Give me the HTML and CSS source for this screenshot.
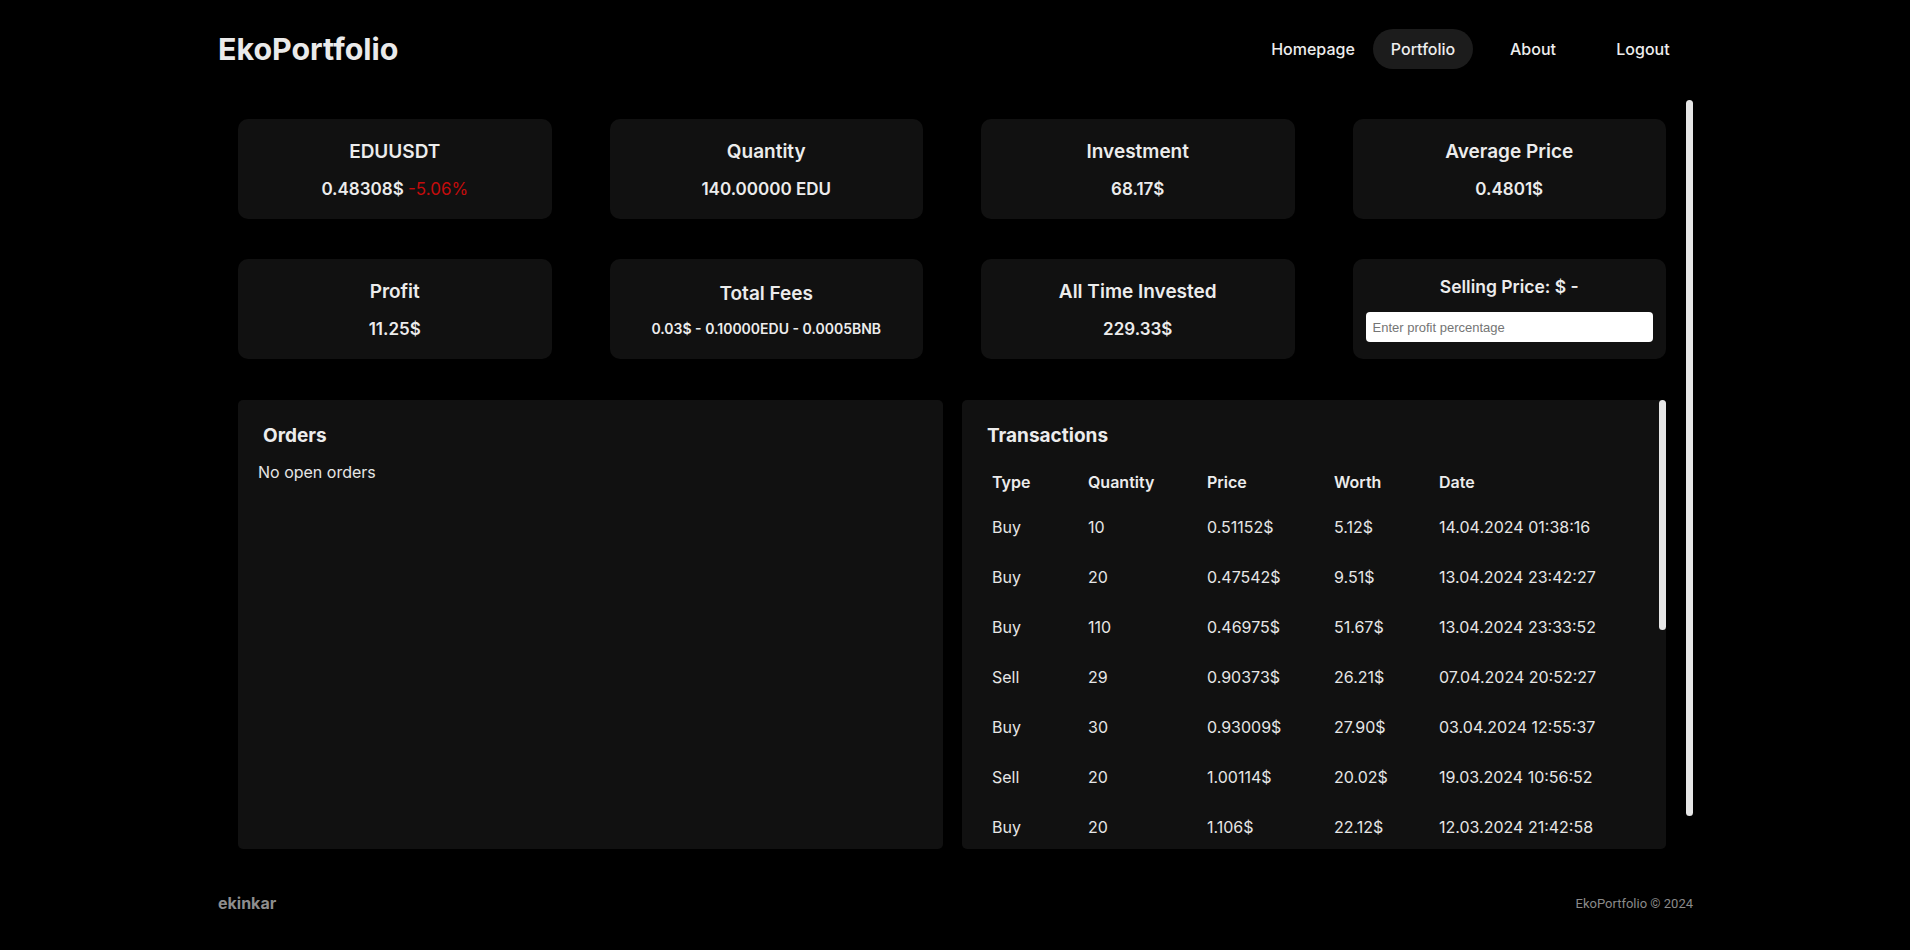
FILE: index.html
```html
<!DOCTYPE html>
<html lang="en">
<head>
<meta charset="utf-8">
<title>EkoPortfolio</title>
<link rel="stylesheet" href="styles.css">
</head>
<body>
<div class="page">
  <header class="topbar">
    <div class="logo">EkoPortfolio</div>
    <nav class="nav">
      <a class="nav-item">Homepage</a>
      <a class="nav-item active">Portfolio</a>
      <a class="nav-item">About</a>
      <a class="nav-item">Logout</a>
    </nav>
  </header>

  <main class="main">
    <div class="main-content">
      <section class="cards">
        <div class="card">
          <div class="card-title">EDUUSDT</div>
          <div class="card-value">0.48308$ <span class="neg">-5.06%</span></div>
        </div>
        <div class="card">
          <div class="card-title">Quantity</div>
          <div class="card-value">140.00000 EDU</div>
        </div>
        <div class="card">
          <div class="card-title">Investment</div>
          <div class="card-value">68.17$</div>
        </div>
        <div class="card">
          <div class="card-title">Average Price</div>
          <div class="card-value">0.4801$</div>
        </div>
        <div class="card">
          <div class="card-title">Profit</div>
          <div class="card-value">11.25$</div>
        </div>
        <div class="card card-fees">
          <div class="card-title">Total Fees</div>
          <div class="card-value small">0.03$ - 0.10000EDU - 0.0005BNB</div>
        </div>
        <div class="card">
          <div class="card-title">All Time Invested</div>
          <div class="card-value">229.33$</div>
        </div>
        <div class="card card-sell">
          <div class="card-title sell-title">Selling Price: $ -</div>
          <input class="pct-input" type="text" placeholder="Enter profit percentage">
        </div>
      </section>

      <section class="panels">
        <div class="panel">
          <h3 class="panel-title">Orders</h3>
          <p class="empty">No open orders</p>
        </div>
        <div class="panel tx-panel">
          <h3 class="panel-title">Transactions</h3>
          <table class="tx">
            <colgroup>
              <col class="c-type"><col class="c-qty"><col class="c-price"><col class="c-worth"><col>
            </colgroup>
            <thead>
              <tr><th>Type</th><th>Quantity</th><th>Price</th><th>Worth</th><th>Date</th></tr>
            </thead>
            <tbody>
              <tr><td>Buy</td><td>10</td><td>0.51152$</td><td>5.12$</td><td>14.04.2024 01:38:16</td></tr>
              <tr><td>Buy</td><td>20</td><td>0.47542$</td><td>9.51$</td><td>13.04.2024 23:42:27</td></tr>
              <tr><td>Buy</td><td>110</td><td>0.46975$</td><td>51.67$</td><td>13.04.2024 23:33:52</td></tr>
              <tr><td>Sell</td><td>29</td><td>0.90373$</td><td>26.21$</td><td>07.04.2024 20:52:27</td></tr>
              <tr><td>Buy</td><td>30</td><td>0.93009$</td><td>27.90$</td><td>03.04.2024 12:55:37</td></tr>
              <tr><td>Sell</td><td>20</td><td>1.00114$</td><td>20.02$</td><td>19.03.2024 10:56:52</td></tr>
              <tr><td>Buy</td><td>20</td><td>1.106$</td><td>22.12$</td><td>12.03.2024 21:42:58</td></tr>
            </tbody>
          </table>
          <div class="panel-thumb"></div>
        </div>
      </section>
    </div>
    <div class="vtrack"><div class="vthumb"></div></div>
  </main>

  <footer class="footer">
    <span class="footer-brand">ekinkar</span>
    <span class="footer-copy">EkoPortfolio © 2024</span>
  </footer>
</div>
</body>
</html>
```
FILE: styles.css
```css
* { box-sizing: border-box; }

html, body {
  margin: 0;
  padding: 0;
  background: #000;
  height: 100%;
  overflow: hidden;
}

body {
  font-family: Inter, "Noto Sans", sans-serif;
  color: #e6e6e6;
}

.page {
  width: 1476px;
  margin: 0 auto;
  height: 950px;
  display: flex;
  flex-direction: column;
}

/* header */
.topbar {
  height: 98px;
  flex: 0 0 98px;
  display: flex;
  align-items: center;
  justify-content: space-between;
}

.logo {
  font-size: 30.4px;
  font-weight: 700;
  color: #eaeaea;
  padding-left: 1px;
}

.nav {
  display: flex;
  gap: 10px;
}

.nav-item {
  width: 100px;
  height: 40px;
  border-radius: 20px;
  display: flex;
  align-items: center;
  justify-content: center;
  font-size: 16px;
  font-weight: 500;
  color: #ededed;
  cursor: pointer;
}

.nav-item.active {
  background: #1c1c1c;
}

/* main area with drawn scrollbar */
.main {
  height: 752px;
  flex: 0 0 752px;
  display: flex;
}

.main-content {
  flex: 1;
  padding: 21px 20px 0 21px;
}

.vtrack {
  width: 7px;
  flex: 0 0 7px;
  padding-top: 2px;
}

.vthumb {
  height: 716px;
  background: #e6e6e6;
  border-radius: 4px;
}

/* cards */
.cards {
  display: grid;
  grid-template-columns: repeat(4, 1fr);
  column-gap: 58px;
  row-gap: 40px;
}

.card {
  height: 100px;
  background: #111111;
  border-radius: 10px;
  display: flex;
  flex-direction: column;
  align-items: center;
  padding-top: 21px;
  gap: 14px;
}

.card-title {
  font-size: 19px;
  font-weight: 600;
  line-height: 24px;
  color: #ececec;
}

.card-value {
  font-size: 17px;
  font-weight: 600;
  line-height: 22px;
  color: #ececec;
}

.card-value.small {
  font-size: 14px;
  line-height: 20px;
}

.neg {
  color: #c40c0c;
  font-weight: 400;
}

.card-fees {
  padding-top: 23px;
  gap: 13px;
}

.card-sell {
  padding: 16px 13px 0;
  gap: 13px;
}

.sell-title {
  font-size: 17.5px;
}

.pct-input {
  width: 100%;
  height: 30px;
  border: none;
  border-radius: 4px;
  background: #fff;
  padding: 0 7px;
  font-family: "Liberation Sans", Arial, sans-serif;
  font-size: 13px;
  color: #222;
  outline: none;
}

.pct-input::placeholder {
  color: #757575;
}

/* panels */
.panels {
  margin-top: 41px;
  display: grid;
  grid-template-columns: 705px 1fr;
  gap: 19px;
}

.panel {
  height: 449px;
  background: #111111;
  border-radius: 5px;
  padding: 21px 20px 0;
  position: relative;
}

.panel-title {
  margin: 0 5px 11px;
  font-size: 19px;
  font-weight: 700;
  line-height: 30px;
  color: #ececec;
}

.empty {
  margin: -2px 0 0;
  font-size: 16px;
  line-height: 24px;
  color: #e6e6e6;
}

.panel-thumb {
  position: absolute;
  top: 0;
  right: 0;
  width: 7px;
  height: 230px;
  background: #e6e6e6;
  border-radius: 4px;
}

.tx {
  margin: 0 5px;
  border-collapse: collapse;
  table-layout: fixed;
  width: calc(100% - 10px);
  font-size: 16px;
  color: #e6e6e6;
}

.c-type { width: 96px; }
.c-qty { width: 119px; }
.c-price { width: 127px; }
.c-worth { width: 105px; }

.tx th {
  height: 40px;
  padding: 0 5px;
  text-align: left;
  font-weight: 600;
  color: #ececec;
}

.tx td {
  height: 50px;
  padding: 0 5px;
  text-align: left;
  font-weight: 400;
}

/* footer */
.footer {
  flex: 1;
  display: flex;
  align-items: center;
  justify-content: space-between;
  padding-top: 6px;
}

.footer-brand {
  font-size: 16px;
  font-weight: 700;
  color: #8e8e8e;
  padding-left: 1px;
}

.footer-copy {
  font-family: Roboto, "Liberation Sans", sans-serif;
  font-size: 13px;
  color: #8a8a8a;
}
```
